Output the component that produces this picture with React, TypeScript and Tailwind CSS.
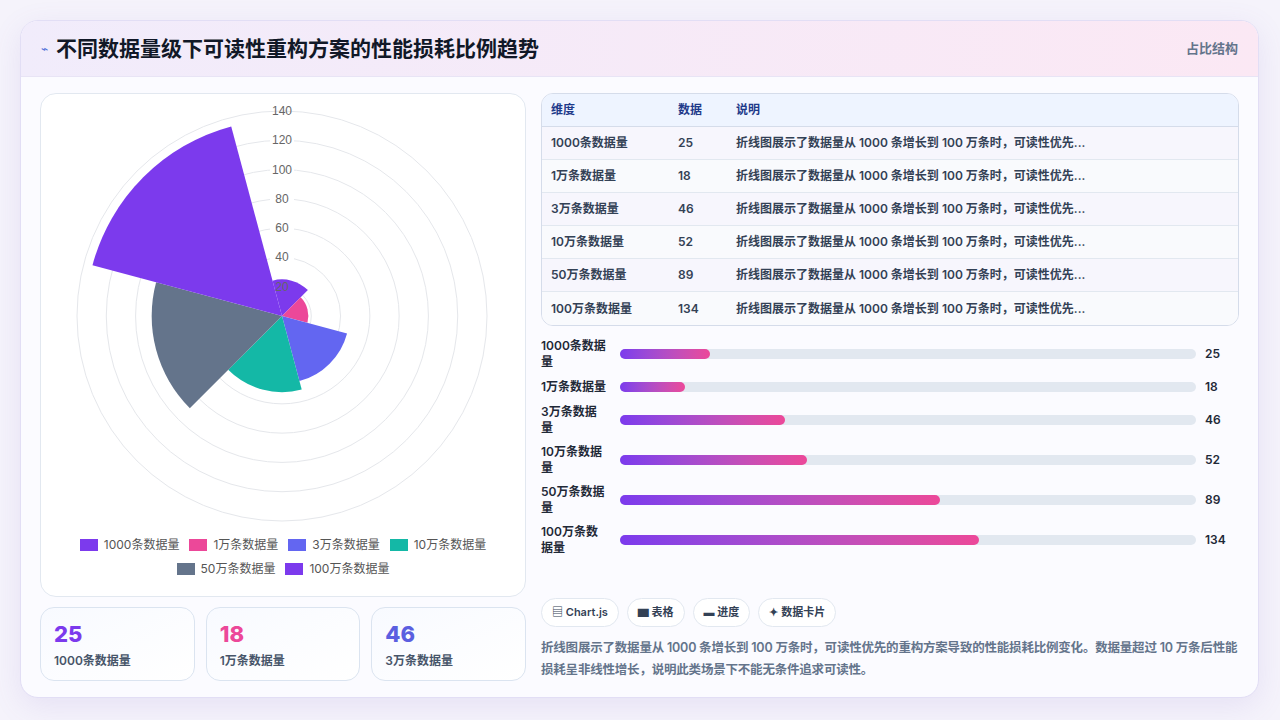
import React from "react";

const data = [
  { l: "1000条数据量", v: 25, c: "#7c3aed", w: 15.6 },
  { l: "1万条数据量", v: 18, c: "#ec4899", w: 11.3 },
  { l: "3万条数据量", v: 46, c: "#6366f1", w: 28.6 },
  { l: "10万条数据量", v: 52, c: "#14b8a6", w: 32.5 },
  { l: "50万条数据量", v: 89, c: "#64748b", w: 55.6 },
  { l: "100万条数据量", v: 134, c: "#7c3aed", w: 62.3 },
];
const desc = "折线图展示了数据量从 1000 条增长到 100 万条时，可读性优先...";

function Polar() {
  const cx = 241, cy = 222, R = 205, max = 140;
  const pt = (r: number, a: number) => [cx + r * Math.cos((a * Math.PI) / 180), cy + r * Math.sin((a * Math.PI) / 180)];
  return (
    <svg width="485" height="440" viewBox="0 0 485 440">
      {[20, 40, 60, 80, 100, 120, 140].map((t) => (
        <circle key={t} cx={cx} cy={cy} r={(t / max) * R} fill="none" stroke="#e5e7eb" strokeWidth="1" />
      ))}
      {data.map((d, i) => {
        const r = (d.v / max) * R;
        const a0 = -105 + i * 60, a1 = a0 + 60;
        const [x0, y0] = pt(r, a0);
        const [x1, y1] = pt(r, a1);
        return <path key={i} d={`M${cx},${cy} L${x0},${y0} A${r},${r} 0 0 1 ${x1},${y1} Z`} fill={d.c} />;
      })}
      {[20, 40, 60, 80, 100, 120, 140].map((t) => {
        const y = cy - (t / max) * R;
        const inside = t <= 120;
        return (
          <g key={t}>
            {inside && t !== 20 ? <rect x={cx - 12} y={y - 7} width="24" height="13" fill="#fff" /> : null}
            <text x={cx} y={y + 4} textAnchor="middle" fontSize="12" fill="#666" fontFamily="Liberation Sans, sans-serif">{t}</text>
          </g>
        );
      })}
    </svg>
  );
}

export default function App() {
  return (
    <div className="w-[1280px] h-[720px] bg-[#f5f3fb] p-[20px] pr-[21px] pb-[22px]" style={{ fontFamily: "Inter, 'Noto Sans CJK SC', sans-serif" }}>
      <div className="h-full rounded-[18px] border border-[#e2def5] bg-[#fbfbff] shadow-[0_8px_30px_rgba(120,100,200,0.12)] overflow-hidden flex flex-col">
        <div className="h-[56px] shrink-0 flex items-center justify-between px-[20px] bg-gradient-to-r from-[#f1ecfb] to-[#fbe8f4] border-b border-[#e8e4f5]">
          <div className="flex items-center gap-[8px]">
            <span className="text-[#4f6fd8] text-[12px]">⌁</span>
            <span className="text-[21px] font-bold text-[#111827]">不同数据量级下可读性重构方案的性能损耗比例趋势</span>
          </div>
          <span className="text-[13px] font-semibold text-[#64748b]">占比结构</span>
        </div>
        <div className="flex-1 flex gap-[15px] px-[19px] pt-[16px] pb-[17px]">
          <div className="w-[486px] flex flex-col gap-[10px]">
            <div className="h-[504px] rounded-[16px] border border-[#e2e8f0] bg-white flex flex-col items-center">
              <Polar />
              <div className="flex flex-wrap justify-center gap-x-[10px] gap-y-[6px] w-[440px] text-[12px] text-[#555] mt-[2px]">
                {data.map((d, i) => (
                  <div key={i} className="flex items-center gap-[6px]">
                    <span className="w-[18px] h-[12px]" style={{ background: d.c }} />
                    {d.l}
                  </div>
                ))}
              </div>
            </div>
            <div className="flex gap-[11px]">
              {data.slice(0, 3).map((d, i) => (
                <div key={i} className="flex-1 h-[74px] rounded-[14px] border border-[#dbe4f0] bg-gradient-to-br from-[#f8faff] to-white px-[13px] pt-[12px]">
                  <div className="text-[22px] font-extrabold leading-[28px]" style={{ color: i === 1 ? "#ec4899" : i === 0 ? "#7c3aed" : "#5b5fe0" }}>{d.v}</div>
                  <div className="text-[12px] font-semibold text-[#475569] mt-[4px]">{d.l}</div>
                </div>
              ))}
            </div>
          </div>
          <div className="flex-1 flex flex-col">
            <div className="rounded-[12px] border border-[#d5dcea] overflow-hidden text-[12px] font-semibold text-[#334155]">
              <div className="flex h-[33px] items-center bg-[#eef4ff] text-[#1e3a8a] border-b border-[#d5dcea]">
                <div className="w-[136px] pl-[9px]">维度</div><div className="w-[58px]">数据</div><div>说明</div>
              </div>
              {data.map((d, i) => (
                <div key={i} className={`flex h-[33px] items-center ${i < 5 ? "border-b border-[#e2e8f0]" : ""} ${i % 2 === 0 ? "bg-[#f7f6fd]" : "bg-[#f9fafd]"}`}>
                  <div className="w-[136px] pl-[9px]">{d.l}</div><div className="w-[58px]">{d.v}</div><div>{desc}</div>
                </div>
              ))}
            </div>
            <div className="flex flex-col gap-[8px] mt-[12px] text-[12px] font-semibold text-[#1f2937]">
              {data.map((d, i) => (
                <div key={i} className="flex items-center">
                  <div className="w-[79px] pr-[12px] leading-[16px]">{d.l}</div>
                  <div className="w-[576px] h-[10px] rounded-full bg-[#e2e8f0]">
                    <div className="h-full rounded-full bg-gradient-to-r from-[#7c3aed] to-[#ec4899]" style={{ width: `${d.w}%` }} />
                  </div>
                  <div className="ml-[9px]">{d.v}</div>
                </div>
              ))}
            </div>
            <div className="mt-auto flex gap-[8px] text-[11px] font-semibold text-[#334155]">
              {["▤ Chart.js", "▆ 表格", "▬ 进度", "✦ 数据卡片"].map((t) => (
                <span key={t} className="h-[29px] px-[10px] rounded-full border border-[#e2e8f0] bg-white flex items-center">{t}</span>
              ))}
            </div>
            <p className="mt-[10px] text-[12.5px] leading-[22px] font-semibold text-[#64748b] tracking-[-0.2px]">
              折线图展示了数据量从 1000 条增长到 100 万条时，可读性优先的重构方案导致的性能损耗比例变化。数据量超过 10 万条后性能损耗呈非线性增长，说明此类场景下不能无条件追求可读性。
            </p>
          </div>
        </div>
      </div>
    </div>
  );
}
